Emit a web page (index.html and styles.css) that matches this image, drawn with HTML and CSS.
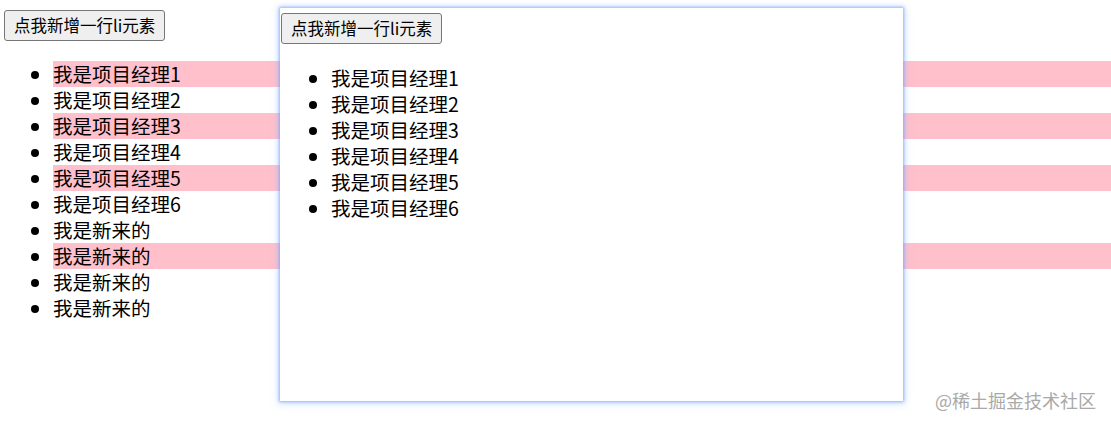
FILE: index.html
```html
<!DOCTYPE html>
<html lang="zh">
<head>
<meta charset="utf-8">
<link rel="stylesheet" href="styles.css">
</head>
<body>
<div class="page">
  <button class="add-btn">点我新增一行li元素</button>
  <ul class="list main-list">
    <li class="hl">我是项目经理1</li>
    <li>我是项目经理2</li>
    <li class="hl">我是项目经理3</li>
    <li>我是项目经理4</li>
    <li class="hl">我是项目经理5</li>
    <li>我是项目经理6</li>
    <li>我是新来的</li>
    <li class="hl">我是新来的</li>
    <li>我是新来的</li>
    <li>我是新来的</li>
  </ul>
</div>
<div class="popup">
  <button class="add-btn">点我新增一行li元素</button>
  <ul class="list popup-list">
    <li>我是项目经理1</li>
    <li>我是项目经理2</li>
    <li>我是项目经理3</li>
    <li>我是项目经理4</li>
    <li>我是项目经理5</li>
    <li>我是项目经理6</li>
  </ul>
</div>
<div class="watermark">@稀土掘金技术社区</div>
</body>
</html>
```

FILE: styles.css
```css
html, body {
  margin: 0;
  padding: 0;
  background: #fff;
}
body {
  font-family: "Noto Sans CJK SC", "Noto Sans", sans-serif;
  color: #000;
  width: 1111px;
  height: 426px;
  overflow: hidden;
  position: relative;
}
.page {
  padding: 10px 0 0 4px;
}
.add-btn {
  display: block;
  font-family: "Noto Sans CJK SC", "Noto Sans", sans-serif;
  font-size: 16.5px;
  line-height: 27px;
  padding: 1px 9px;
  margin: 0;
  border: 1px solid #767676;
  border-radius: 3px;
  background: #efefef;
  color: #000;
  white-space: nowrap;
}
.list {
  list-style: disc;
  margin: 0;
  font-size: 19.5px;
}
.list li {
  line-height: 26px;
  height: 26px;
}
.main-list {
  margin: 20px 0 0 -4px;
  padding-left: 53px;
}
.main-list li.hl {
  background: #ffc0cb;
}
.popup {
  position: absolute;
  left: 280px;
  top: 8px;
  width: 623px;
  height: 393px;
  background: #fff;
  box-shadow: 0 0 3px 1px rgba(110, 160, 255, 0.75), 0 1px 8px 2px rgba(150, 190, 255, 0.35);
  box-sizing: border-box;
  padding: 5px 0 0 1px;
}
.popup-list {
  margin: 21px 0 0 -1px;
  padding-left: 51px;
}
.watermark {
  position: absolute;
  left: 935px;
  top: 388px;
  font-size: 18px;
  line-height: 24px;
  color: #a9a9a9;
  white-space: nowrap;
}
```
